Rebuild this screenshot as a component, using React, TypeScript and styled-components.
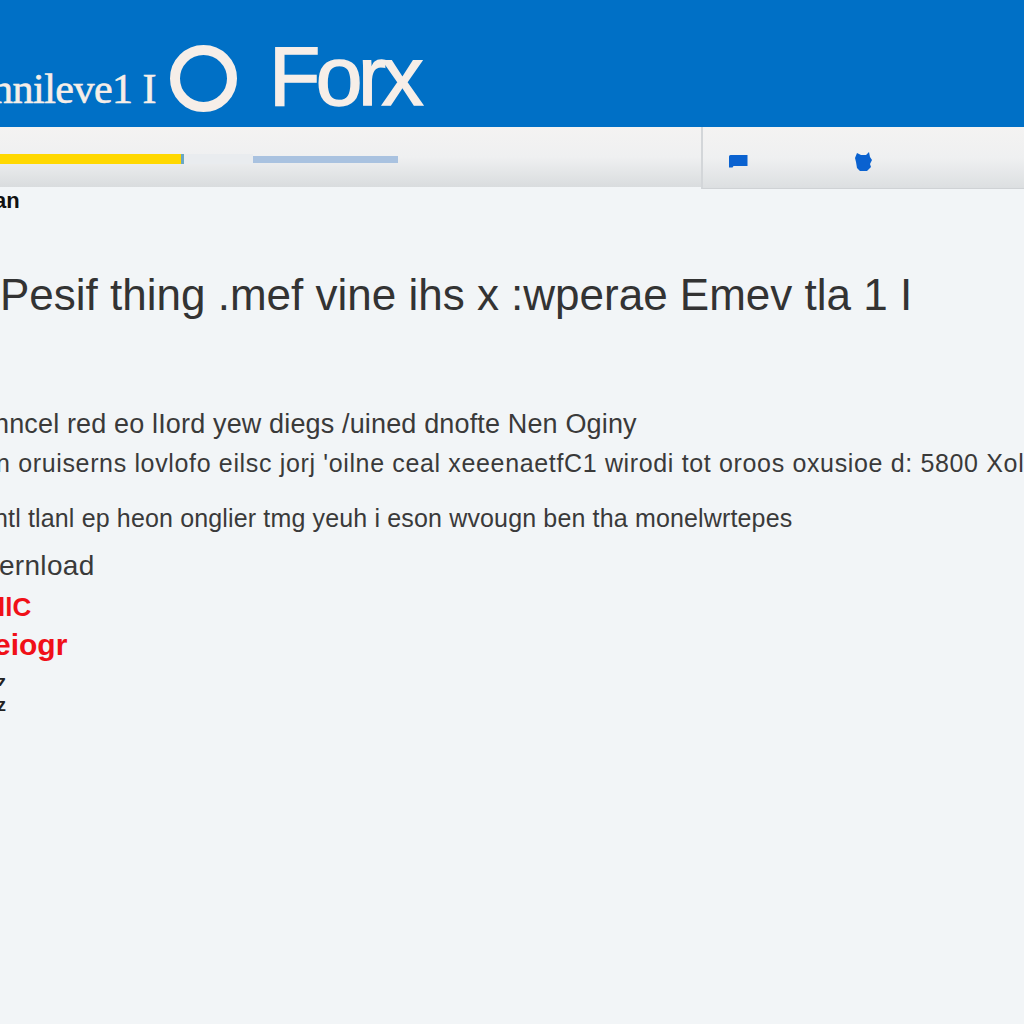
import React from "react";
import styled, { createGlobalStyle } from "styled-components";

const Global = createGlobalStyle`
  html, body { margin: 0; padding: 0; background: #f2f5f7; }
  body { font-family: "Liberation Sans", Arial, sans-serif; }
`;

const Page = styled.div`
  width: 1024px;
  height: 1024px;
  overflow: hidden;
  background: #f2f5f7;
  display: flex;
  flex-direction: column;
`;

const Header = styled.header`
  height: 127px;
  flex: none;
  background: #0070c6;
  display: flex;
  align-items: flex-start;
  color: #f6eee8;
  overflow: hidden;
`;

const Tagline = styled.span`
  font-family: "Liberation Serif", serif;
  font-size: 42px;
  line-height: 1;
  letter-spacing: -0.5px;
  white-space: nowrap;
  margin-left: -8px;
  margin-top: 68px;
  width: 172px;
  flex: none;
  -webkit-text-stroke: 0.6px #f6eee8;
`;

const Ring = styled.div`
  width: 67px;
  height: 67px;
  box-sizing: border-box;
  border: 10px solid #f6eee8;
  border-radius: 50%;
  margin-left: 6px;
  margin-top: 45px;
  flex: none;
`;

const Brand = styled.span`
  font-size: 84px;
  line-height: 1;
  letter-spacing: -4.5px;
  margin-left: 32px;
  margin-top: 34px;
  white-space: nowrap;
  -webkit-text-stroke: 1.5px #f6eee8;
`;

const Toolbar = styled.nav`
  height: 60px;
  flex: none;
  display: flex;
  background: linear-gradient(#f4f3f2 0%, #eff0f1 50%, #d9dcde 100%);
`;

const Progress = styled.div`
  width: 701px;
  flex: none;
  display: flex;
  align-items: center;
  padding-top: 4px;
  box-sizing: border-box;
`;

const YellowBar = styled.div`
  width: 184px;
  height: 10px;
  background: #ffd800;
  border-right: 3px solid #6aa8c4;
  box-sizing: border-box;
`;

const GhostBar = styled.div`
  width: 69px;
  height: 10px;
  background: #e9ecef;
`;

const BlueBar = styled.div`
  width: 145px;
  height: 7px;
  background: #a9c2e0;
`;

const Tools = styled.div`
  flex: 1;
  height: 62px;
  box-sizing: border-box;
  border-left: 2px solid #d3d6d9;
  border-bottom: 1px solid #cfd2d5;
  display: flex;
  align-items: center;
  padding: 8px 0 0 25px;
  background: linear-gradient(#f4f3f2 0%, #eff0f1 50%, #dcdfe1 100%);
`;

const ToolIcon = styled.svg<{ $gap?: number }>`
  flex: none;
  display: block;
  margin-left: ${(p) => p.$gap ?? 0}px;
`;

const Content = styled.main`
  flex: 1;
  display: flex;
  flex-direction: column;
  overflow: hidden;
`;

const Crumb = styled.div`
  font-size: 22px;
  font-weight: 700;
  line-height: 22px;
  color: #111;
  margin: 3px 0 0 -6px;
  white-space: nowrap;
`;

const Heading = styled.h1`
  font-size: 44px;
  font-weight: 400;
  line-height: 46px;
  color: #333;
  margin: 60px 0 0 0;
  white-space: nowrap;
`;

const Line = styled.p<{ $top: number; $size: number; $left: number; $track?: number }>`
  font-size: ${(p) => p.$size}px;
  line-height: ${(p) => p.$size + 4}px;
  letter-spacing: ${(p) => p.$track ?? 0}px;
  color: #3a3a3a;
  margin: ${(p) => p.$top}px 0 0 ${(p) => p.$left}px;
  white-space: nowrap;
`;

const Alert = styled.p<{ $top: number; $left: number; $size: number }>`
  font-size: ${(p) => p.$size}px;
  line-height: ${(p) => p.$size + 4}px;
  font-weight: 700;
  color: #f01018;
  margin: ${(p) => p.$top}px 0 0 ${(p) => p.$left}px;
  white-space: nowrap;
`;

const Tiny = styled.p<{ $top: number; $height: number }>`
  font-size: 18px;
  line-height: ${(p) => p.$height}px;
  height: ${(p) => p.$height}px;
  overflow: hidden;
  color: #222;
  font-weight: 700;
  margin: ${(p) => p.$top}px 0 0 -3px;
`;

export default function App() {
  return (
    <Page>
      <Global />
      <Header>
        <Tagline>nnileve1 I</Tagline>
        <Ring />
        <Brand>Forx</Brand>
      </Header>
      <Toolbar>
        <Progress>
          <YellowBar />
          <GhostBar />
          <BlueBar />
        </Progress>
        <Tools>
          <ToolIcon width="20" height="15" viewBox="0 0 20 15">
            <path d="M1 2.5Q1 1 2.5 1H19.5V12H5.5L4.5 13.5H1Z" fill="#0a62d0" />
          </ToolIcon>
          <ToolIcon $gap={106} width="19" height="21" viewBox="0 0 19 21">
            <path d="M3 2L7 4L12 4L15 1L16 6L18 9L16 13L17 16L13 20L6 20L3 17L2 11L1 7Z" fill="#0a62d0" />
          </ToolIcon>
        </Tools>
      </Toolbar>
      <Content>
        <Crumb>an</Crumb>
        <Heading>Pesif thing .mef vine ihs x :wperae Emev tla 1 I</Heading>
        <Line $top={91} $size={27} $left={-6} $track={0.15}>
          nncel red eo lIord yew diegs /uined dnofte Nen Oginy
        </Line>
        <Line $top={9} $size={25} $left={-4} $track={0.65}>
          n oruiserns lovlofo eilsc jorj 'oilne ceal xeeenaetfC1 wirodi tot oroos oxusioe d: 5800 Xol
        </Line>
        <Line $top={26} $size={25} $left={-6} $track={0.15}>
          ntl tlanl ep heon onglier tmg yeuh i eson wvougn ben tha monelwrtepes
        </Line>
        <Line $top={17} $size={28} $left={-1} $track={0.3}>ernload</Line>
        <Alert $top={10} $left={-2} $size={26}>llC</Alert>
        <Alert $top={6} $left={-6} $size={30}>eiogr</Alert>
        <Tiny $top={16} $height={8}>z</Tiny>
        <Tiny $top={11} $height={16}>z</Tiny>
      </Content>
    </Page>
  );
}
